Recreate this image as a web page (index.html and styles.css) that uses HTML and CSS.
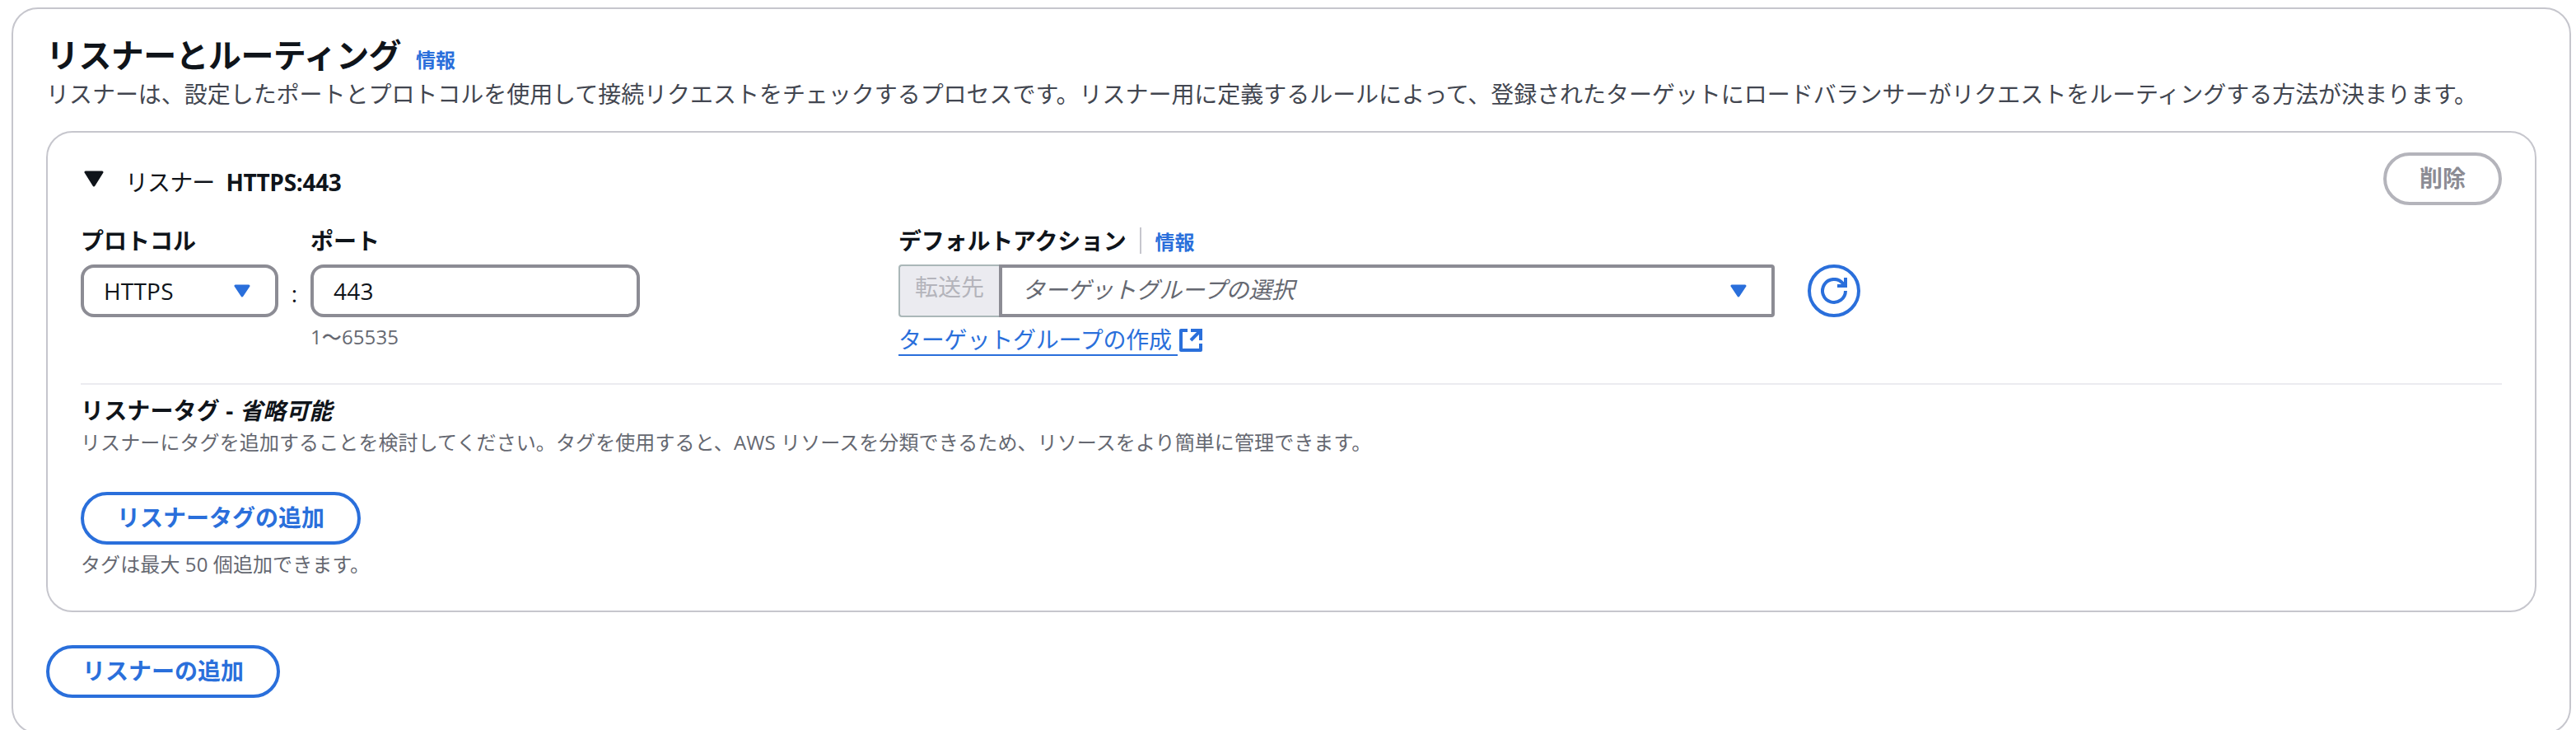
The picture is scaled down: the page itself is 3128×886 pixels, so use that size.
FILE: index.html
```html
<!DOCTYPE html>
<html lang="ja">
<head>
    <meta charset="UTF-8">
    <meta name="viewport" content="width=device-width, initial-scale=1.0">
    <title>リスナーとルーティング</title>
    <link rel="stylesheet" href="styles.css">
</head>
<body>

    <section class="container">
        <div class="header">
            <h2 class="title">リスナーとルーティング</h2>
            <a class="info">情報</a>
        </div>
        <p class="description">リスナーは、設定したポートとプロトコルを使用して接続リクエストをチェックするプロセスです。リスナー用に定義するルールによって、登録されたターゲットにロードバランサーがリクエストをルーティングする方法が決まります。</p>

        <div class="listener">
            <!-- Expandable header -->
            <div class="listener-header">
                <svg class="caret-large" viewBox="0 0 24 20"><path d="M2 2h20L12 18z" fill="#0f141a" stroke="#0f141a" stroke-width="3" stroke-linejoin="round"/></svg>
                <div class="listener-name">リスナー</div>
                <div class="listener-value">HTTPS:443</div>
                <button class="button button-disabled">削除</button>
            </div>

            <!-- Protocol, port and default action -->
            <div class="fields">
                <div class="field protocol">
                    <label class="label">プロトコル</label>
                    <div class="control">
                        <span>HTTPS</span>
                        <svg class="caret" viewBox="0 0 20 16"><path d="M2 2h16L10 14z" fill="#2a6fdb" stroke="#2a6fdb" stroke-width="3" stroke-linejoin="round"/></svg>
                    </div>
                </div>
                <div class="colon">:</div>
                <div class="field port">
                    <label class="label">ポート</label>
                    <div class="control">443</div>
                    <div class="hint port-hint">1〜65535</div>
                </div>
                <div class="field action">
                    <div class="label-row">
                        <label class="label">デフォルトアクション</label>
                        <span class="separator"></span>
                        <a class="info">情報</a>
                    </div>
                    <div class="action-row">
                        <div class="prefix">転送先</div>
                        <div class="control target">
                            <span class="placeholder">ターゲットグループの選択</span>
                            <svg class="caret" viewBox="0 0 20 16"><path d="M2 2h16L10 14z" fill="#2a6fdb" stroke="#2a6fdb" stroke-width="3" stroke-linejoin="round"/></svg>
                        </div>
                        <button class="refresh">
                            <svg viewBox="0 0 32 32" fill="none" stroke="#2a6fdb" stroke-width="4">
                                <path d="M30 16a14 14 0 1 1-3.2-9l2.6 3.5"/>
                                <path d="M30 0v10H20"/>
                            </svg>
                        </button>
                    </div>
                    <a class="link">
                        <span class="link-text">ターゲットグループの作成</span>
                        <svg class="external" viewBox="0 0 28 28" fill="none" stroke="#2a6fdb" stroke-width="4">
                            <path d="M10 2H2v24h24v-8" stroke-linejoin="round"/>
                            <path d="M14 2h12v12M26 2L14 14"/>
                        </svg>
                    </a>
                </div>
            </div>

            <!-- Tags -->
            <div class="tags">
                <div class="label tags-label">リスナータグ - <i>省略可能</i></div>
                <div class="hint tags-hint">リスナーにタグを追加することを検討してください。タグを使用すると、AWS リソースを分類できるため、リソースをより簡単に管理できます。</div>
                <button class="button add-tag">リスナータグの追加</button>
                <div class="hint">タグは最大 50 個追加できます。</div>
            </div>
        </div>

        <button class="button add-listener">リスナーの追加</button>
    </section>

</body>
</html>
```
FILE: styles.css
```css
* {
    box-sizing: border-box;
}

body {
    margin: 0;
    height: 886px;
    overflow: hidden;
    background: #fff;
    color: #0f141a;
    font-family: "Open Sans", "Noto Sans CJK JP", sans-serif;
    font-size: 28px;
    line-height: 40px;
    white-space: nowrap;
}

.container {
    width: 3108px;
    height: 882px;
    margin: 9px 0 0 14px;
    padding: 32px 40px 0;
    border: 2px solid #c6c6cd;
    border-radius: 32px;
}

.header {
    display: flex;
    align-items: baseline;
    gap: 18px;
    height: 48px;
}

.title {
    margin: 0;
    font-size: 40px;
    line-height: 48px;
    letter-spacing: -0.6px;
}

.info {
    color: #2a6fdb;
    font-size: 24px;
    font-weight: 700;
}

.description {
    height: 40px;
    margin: 3px 0 25px;
    color: #424650;
    letter-spacing: -0.04px;
}

.listener {
    height: 584px;
    padding: 24px 40px 0;
    border: 2px solid #c6c6cd;
    border-radius: 32px;
}

.listener-header {
    display: flex;
    height: 64px;
}

.caret-large {
    width: 24px;
    height: 20px;
    margin: 22px 26px 0 4px;
}

.listener-name,
.listener-value {
    padding-top: 16px;
}

.listener-name {
    letter-spacing: -0.9px;
}

.listener-value {
    margin-left: 14px;
    font-weight: 700;
    letter-spacing: -0.3px;
}

.button {
    display: block;
    height: 64px;
    padding: 0 0 2px;
    border: 4px solid #2a6fdb;
    border-radius: 32px;
    background: #fff;
    color: #2a6fdb;
    font: inherit;
    font-weight: 700;
}

.button-disabled {
    width: 144px;
    margin-left: auto;
    border-color: #b4b4bb;
    color: #8c8c94;
}

.fields {
    display: flex;
    height: 216px;
    padding-top: 23px;
}

.label {
    display: block;
    height: 40px;
    font-weight: 700;
}

.protocol {
    width: 240px;
}

.colon {
    width: 39px;
    padding-top: 64px;
    text-align: center;
}

.port {
    width: 400px;
}

.action {
    margin-left: 314px;
}

.control {
    display: flex;
    align-items: center;
    justify-content: space-between;
    height: 64px;
    margin-top: 9px;
    padding: 0 30px 0 24px;
    border: 4px solid #8c8c94;
    border-radius: 16px;
    font-weight: 500;
    letter-spacing: 0.2px;
}

.caret {
    width: 20px;
    height: 16px;
}

.hint {
    color: #656871;
    font-size: 24px;
    line-height: 32px;
    letter-spacing: 0.1px;
}

.port-hint {
    margin-top: 8px;
    font-weight: 500;
}

.label-row {
    display: flex;
    align-items: baseline;
    height: 40px;
    letter-spacing: -0.2px;
}

.separator {
    align-self: center;
    width: 2px;
    height: 32px;
    margin: 0 17px 0 16px;
    background: #c6c6cd;
}

.action-row {
    display: flex;
    margin-top: 9px;
}

.prefix {
    width: 122px;
    height: 64px;
    padding: 5px 0 0 18px;
    border: 2px solid #aab7b8;
    border-right: 0;
    border-radius: 4px 0 0 4px;
    background: #ebebf0;
    color: #b4b4bb;
}

.target {
    width: 942px;
    margin-top: 0;
    border-radius: 0 4px 4px 0;
}

.placeholder {
    padding-bottom: 4px;
    color: #656871;
    font-style: italic;
    font-weight: 400;
    letter-spacing: -0.3px;
}

.refresh {
    display: grid;
    place-items: center;
    width: 64px;
    height: 64px;
    margin-left: 40px;
    padding: 0;
    border: 4px solid #2a6fdb;
    border-radius: 50%;
    background: #fff;
}

.refresh svg {
    width: 32px;
    height: 32px;
}

.link {
    display: flex;
    margin-top: 7px;
    color: #2a6fdb;
}

.link-text {
    width: 339px;
    height: 40px;
    border-bottom: 2px solid #2a6fdb;
    letter-spacing: -0.2px;
}

.external {
    width: 28px;
    height: 28px;
    margin: 7px 0 0 2px;
}

.tags {
    padding-top: 11px;
    border-top: 2px solid #ebebf0;
}

.tags-label {
    letter-spacing: 0.15px;
}

.tags-hint {
    margin-top: 3px;
}

.add-tag {
    width: 340px;
    margin: 44px 0 8px;
}

.add-listener {
    width: 284px;
    margin-top: 40px;
}
```
